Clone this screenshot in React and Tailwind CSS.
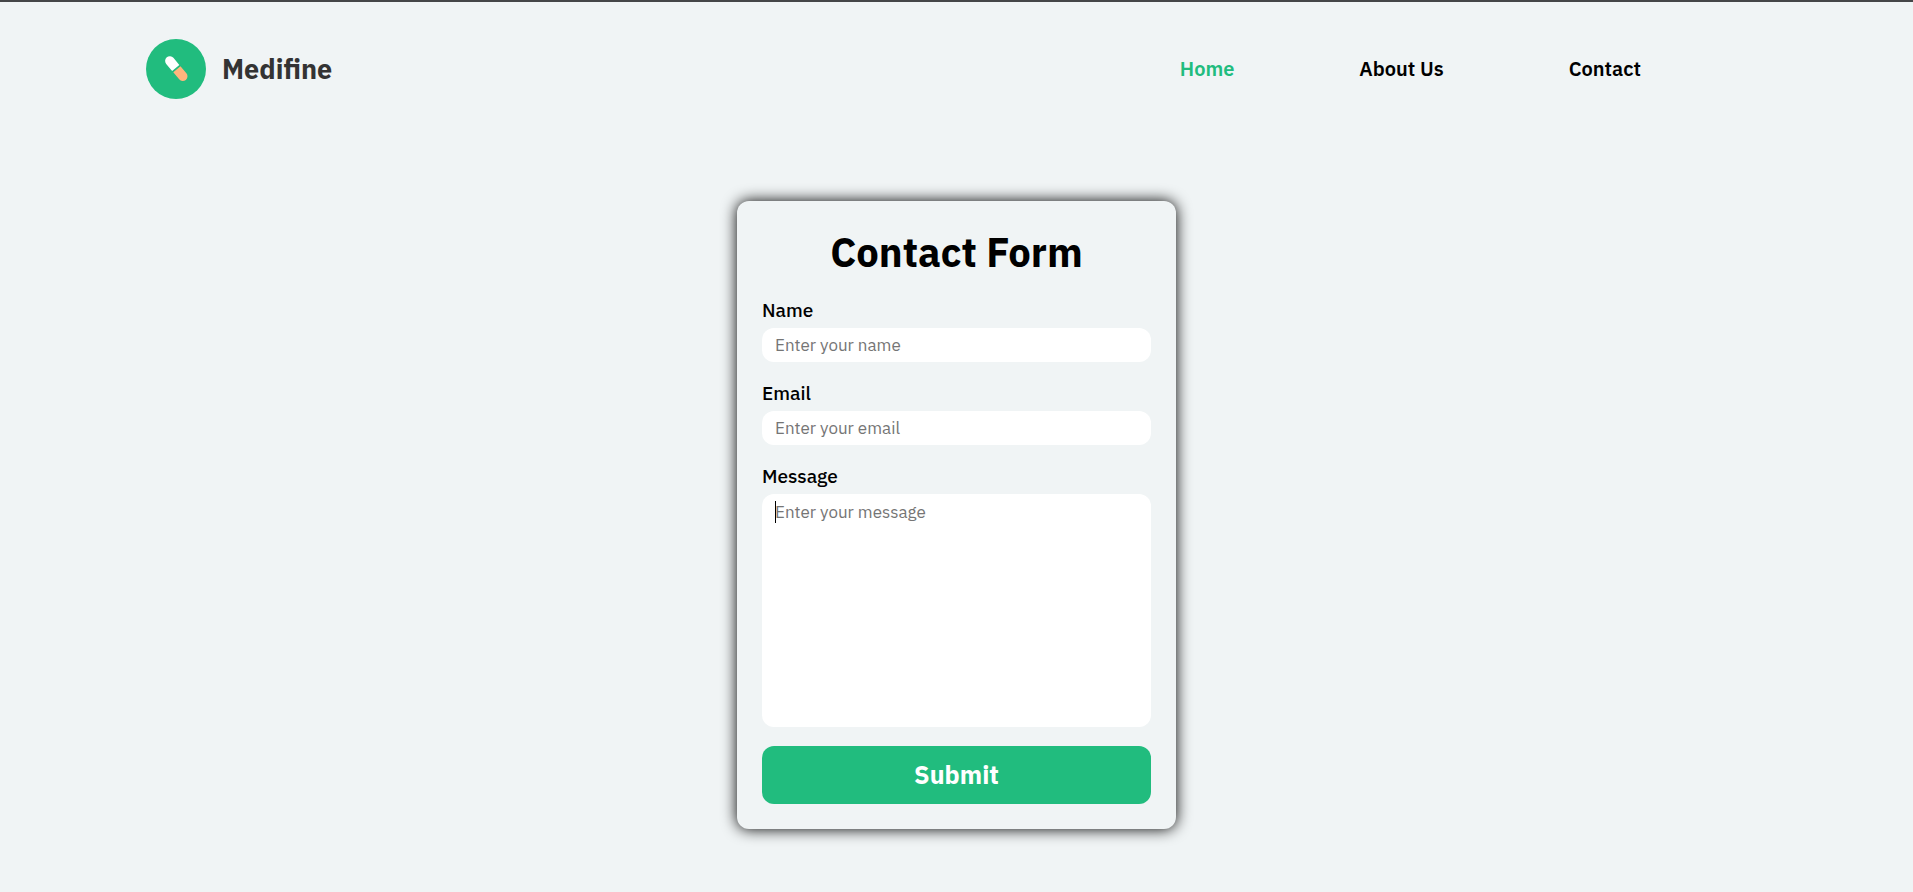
import React, { useState } from "react";

const links = [
  { label: "Home", href: "#home", active: true },
  { label: "About Us", href: "#about" },
  { label: "Contact", href: "#contact" },
];

function Logo() {
  return (
    <a href="#home" className="flex items-center gap-4">
      <svg viewBox="0 0 60 60" className="size-15" aria-hidden="true">
        <circle cx="30" cy="30" r="30" fill="#21bc7e" />
        <g transform="translate(30.3 29.6) rotate(50)">
          <path d="M-0.9 -4.7V4.7H-10.1A4.7 4.7 0 0 1 -10.1 -4.7Z" fill="#fff" />
          <path d="M0.9 -4.7V4.7H10.1A4.7 4.7 0 0 0 10.1 -4.7Z" fill="#ffb57d" />
        </g>
      </svg>
      <span className="text-[27px] font-bold text-[#333333]">Medifine</span>
    </a>
  );
}

function Header() {
  return (
    <header className="flex items-center justify-between pt-[37px] pr-[272px] pl-[146px]">
      <Logo />
      <nav className="flex gap-[125px] text-xl font-semibold text-black">
        {links.map((link) => (
          <a key={link.label} href={link.href} className={link.active ? "text-[#21bc7e]" : ""}>
            {link.label}
          </a>
        ))}
      </nav>
    </header>
  );
}

const fieldClass =
  "block w-full resize-none rounded-xl bg-white px-[13px] text-[17px] leading-6 text-black outline-none placeholder:text-[#757575]";
const labelClass = "mb-1.5 block text-[19px] leading-6 font-medium text-black";

function ContactForm() {
  const [message, setMessage] = useState("");

  return (
    <form
      onSubmit={(event) => event.preventDefault()}
      className="flex w-[439px] max-w-full flex-col rounded-xl bg-[#f0f4f5] p-[25px] shadow-[0_0_15px_black]"
    >
      <h1 className="mb-5 text-center text-[40px] leading-[52px] font-bold text-black">
        Contact Form
      </h1>
      <div className="mb-[19px]">
        <label htmlFor="name" className={labelClass}>Name</label>
        <input id="name" type="text" placeholder="Enter your name" className={`${fieldClass} py-[5px]`} />
      </div>
      <div className="mb-[19px]">
        <label htmlFor="email" className={labelClass}>Email</label>
        <input id="email" type="email" placeholder="Enter your email" className={`${fieldClass} py-[5px]`} />
      </div>
      <div className="mb-[19px]">
        <label htmlFor="message" className={labelClass}>Message</label>
        <div className="relative">
          <textarea
            id="message"
            value={message}
            onChange={(event) => setMessage(event.target.value)}
            placeholder="Enter your message"
            className={`${fieldClass} h-[233px] py-1.5`}
          />
          {message === "" && (
            <span aria-hidden="true" className="pointer-events-none absolute top-[7px] left-[13px] h-[22px] w-px bg-black" />
          )}
        </div>
      </div>
      <button type="submit" className="h-[58px] rounded-xl bg-[#21bc7e] text-[25px] font-bold text-white">
        Submit
      </button>
    </form>
  );
}

export default function App() {
  return (
    <div className="min-h-screen border-t-2 border-[#454648] bg-[#f0f4f5] font-['IBM_Plex_Sans',Roboto,sans-serif]">
      <Header />
      <main className="flex justify-center px-4 pt-[102px] pb-15">
        <ContactForm />
      </main>
    </div>
  );
}
